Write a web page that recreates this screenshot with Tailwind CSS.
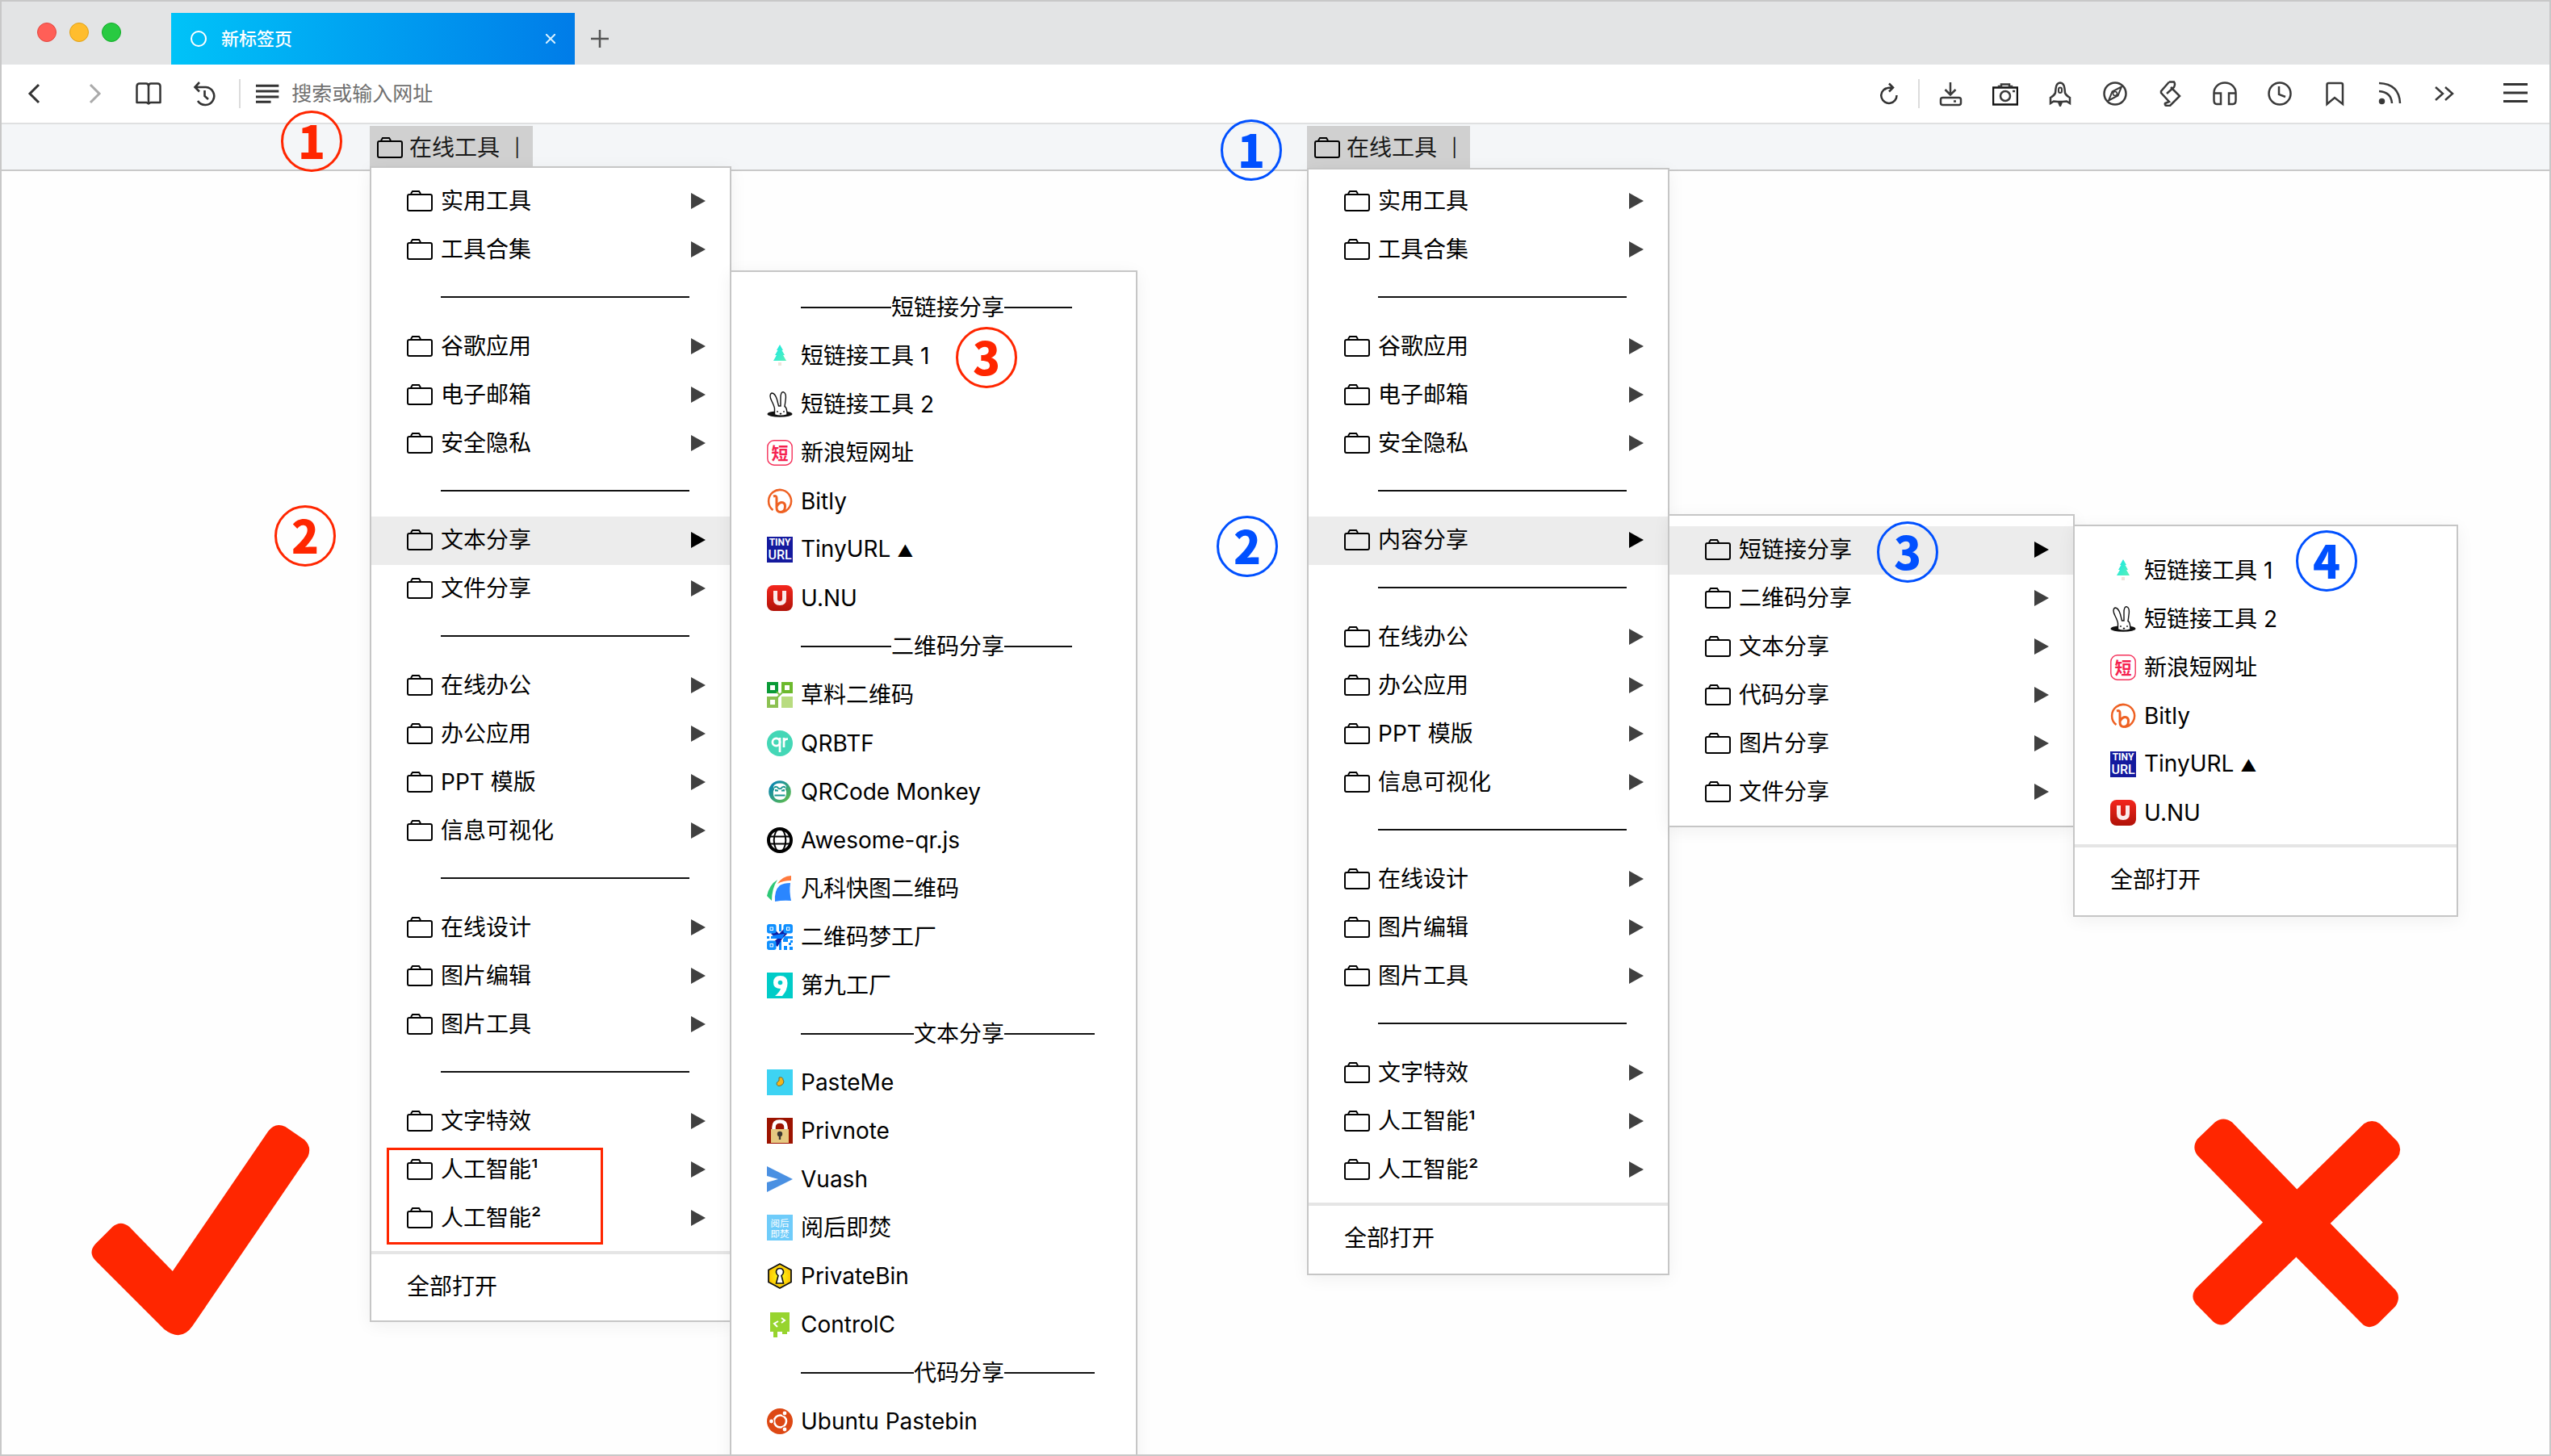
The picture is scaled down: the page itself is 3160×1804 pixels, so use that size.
<!DOCTYPE html>
<html lang="zh-CN">
<head>
<meta charset="utf-8">
<title>新标签页</title>
<script src="https://cdn.jsdelivr.net/npm/@tailwindcss/browser@4"></script>
</head>
<body class="bg-[#fefefe] font-[Inter,'Noto_Sans_CJK_SC',sans-serif] text-[28px] leading-[40px] text-black">
<div class="relative flex h-screen w-full flex-col overflow-hidden border-2 border-[#c8c8c8]">

  <header class="flex h-[78px] shrink-0 items-stretch bg-[#e3e4e5]">
    <div class="flex w-[210px] items-center gap-4 pb-[2px] pl-11">
      <button aria-label="关闭窗口" class="size-6 rounded-full border border-[#e2463f] bg-[#ff5f57]"></button>
      <button aria-label="最小化" class="size-6 rounded-full border border-[#e1a116] bg-[#ffbd2e]"></button>
      <button aria-label="全屏" class="size-6 rounded-full border border-[#12ac28] bg-[#28ca41]"></button>
    </div>
    <div class="mt-[14px] flex w-[500px] items-center bg-linear-to-r from-[#00c3f8] to-[#007ce8] pr-6 pl-6 text-white">
      <svg class="size-5" viewBox="0 0 20 20" fill="none" stroke="#fff" stroke-width="2"><circle cx="10" cy="10" r="9"/></svg>
      <span class="ml-[18px] flex-1 text-[22px] font-medium">新标签页</span>
      <button aria-label="关闭标签页"><svg class="size-3" viewBox="0 0 12 12" stroke="#d6efff" stroke-width="2"><path d="M0 0L12 12M12 0L0 12"/></svg></button>
    </div>
    <button aria-label="新建标签页" class="mt-[14px] flex w-[62px] items-center justify-center"><svg class="size-6" viewBox="0 0 24 24" stroke="#555" stroke-width="2.500"><path d="M12 1V23M1 12H23"/></svg></button>
  </header>

  <div class="flex h-[74px] shrink-0 items-center border-b-2 border-[#dfe0e1] bg-white pr-[26px] pl-6 text-[#3c3c3c]">
    <nav class="flex items-center gap-9" aria-label="导航">
      <button aria-label="后退"><svg class="size-8" viewBox="0 0 32 32" fill="none" stroke="#333" stroke-width="3"><path d="M22 5L11 16L22 27"/></svg></button>
      <button aria-label="前进" class="ml-1.5"><svg class="size-8" viewBox="0 0 32 32" fill="none" stroke="#aaa" stroke-width="3"><path d="M12 5L23 16L12 27"/></svg></button>
      <button aria-label="阅读"><svg class="size-8" viewBox="0 0 32 32" fill="none" stroke="#333" stroke-width="2.500" stroke-linejoin="round"><path d="M1.500 7Q1.500 3.500 5 3.500H13Q16 3.500 16 7Q16 3.500 19 3.500H27Q30.500 3.500 30.500 7V27H18.500L16 28.500L13.500 27H1.500ZM16 7V27"/></svg></button>
      <button aria-label="历史" class="ml-[2px]"><svg class="size-8" viewBox="0 0 32 32" fill="none" stroke="#333" stroke-width="2.600"><path d="M4 8H17A11 11 0 1 1 7 25M9 2L3.500 8L9 13.500M15.500 12V19L20 23"/></svg></button>
    </nav>
    <div class="ml-[26px] h-9 w-[2px] bg-[#dcdcdc]"></div>
    <label class="ml-[18px] flex flex-1 items-center gap-[14px]">
      <svg class="size-8" viewBox="0 0 32 32" stroke="#333" stroke-width="3"><path d="M1 6H30M1 13H30M1 20H30M1 26.500H20"/></svg>
      <input aria-label="地址栏" placeholder="搜索或输入网址" class="h-10 w-full bg-transparent text-[25px] outline-none placeholder:text-[#707070]">
    </label>
    <button aria-label="刷新"><svg class="size-8" viewBox="0 0 32 32" fill="none" stroke="#333" stroke-width="2.500"><path d="M12 9.500A9.600 9.600 0 1 0 25.500 18M10.500 11Q13 8.500 19 8.500M16 3.500L21 8.500L16 13.500"/></svg></button>
    <div class="ml-5 h-9 w-[2px] bg-[#dcdcdc]"></div>
    <div id="tools" class="ml-[22px] flex items-center gap-9"></div>
    <button aria-label="菜单" class="ml-14"><svg class="size-8" viewBox="0 0 32 32" stroke="#333" stroke-width="3"><path d="M1 4.500H31M1 15H31M1 25.500H31"/></svg></button>
  </div>

  <nav class="relative z-10 flex h-[58px] shrink-0 border-b-2 border-[#c9c9c9] bg-[#f4f6f8] pt-[2px] pl-[456px]" aria-label="书签栏">
    <div class="relative h-[54px] w-[202px]">
      <button class="flex h-[50px] w-full items-center bg-[#d0d0d0] pt-1 pl-[9px] text-[#1a1a1a]">
        <svg class="size-8" viewBox="0 0 32 32"><use href="#folder"/></svg><span class="ml-2">在线工具</span><span class="ml-[18px] text-[22px]">|</span>
      </button>
      <div id="menu-left" class="absolute top-[50px] left-0 w-[448px] border-2 border-[#c6c6c6] bg-white pt-3 pb-3 shadow-[0_4px_20px_rgba(0,0,0,0.06)]"></div>
    </div>
    <div class="relative ml-[959px] h-[54px] w-[202px]">
      <button class="flex h-[52px] w-full items-center bg-[#d0d0d0] pt-[2px] pl-[9px] text-[#1a1a1a]">
        <svg class="size-8" viewBox="0 0 32 32"><use href="#folder"/></svg><span class="ml-2">在线工具</span><span class="ml-[18px] text-[22px]">|</span>
      </button>
      <div id="menu-right" class="absolute top-[52px] left-0 w-[449px] border-2 border-[#c6c6c6] bg-white pt-[10px] pb-[14px] shadow-[0_4px_20px_rgba(0,0,0,0.06)]"></div>
    </div>
  </nav>
  <main class="flex-1"></main>

  <div class="absolute top-[1420px] left-[477px] z-20 h-[120px] w-[268px] border-3 border-[#ff2600]"></div>
  <svg class="absolute top-[1391px] left-[111px] z-20 h-[262px] w-[271px]" viewBox="158 159 812 786" fill="#ff2600" role="img" aria-label="正确"><path d="M236 541Q267 514 300 541L460 705L815 185Q841 150 879 168L950 217Q978 243 963 279L533 910Q491 970 428 920L173 665Q145 636 173 604Z"/></svg>
  <svg class="absolute top-[1384px] left-[2714px] z-20 h-[259px] w-[258px]" viewBox="108 137 774 776" fill="#ff2600" role="img" aria-label="错误"><path d="M191 150Q222 126 255 150L496 399L745 155Q775 136 804 155L869 221Q890 250 869 283L620 526L862 773Q884 800 862 834L798 898Q762 924 737 898L493 651L246 890Q215 916 184 890L122 827Q96 797 122 766L369 522L126 273Q104 244 126 212Z"/></svg>

  <span class="absolute top-[135px] left-[346px] z-20 flex size-[76px] items-center justify-center rounded-full border-3 border-[#ff2600] pb-1 font-['Noto_Sans_CJK_SC',sans-serif] text-[56px] leading-none font-black text-[#ff2600]">1</span>
  <span class="absolute top-[624px] left-[338px] z-20 flex size-[76px] items-center justify-center rounded-full border-3 border-[#ff2600] pb-1 font-['Noto_Sans_CJK_SC',sans-serif] text-[56px] leading-none font-black text-[#ff2600]">2</span>
  <span class="absolute top-[403px] left-[1182px] z-20 flex size-[76px] items-center justify-center rounded-full border-3 border-[#ff2600] pb-1 font-['Noto_Sans_CJK_SC',sans-serif] text-[56px] leading-none font-black text-[#ff2600]">3</span>
  <span class="absolute top-[146px] left-[1510px] z-20 flex size-[76px] items-center justify-center rounded-full border-3 border-[#0050ff] pb-1 font-['Noto_Sans_CJK_SC',sans-serif] text-[56px] leading-none font-black text-[#0050ff]">1</span>
  <span class="absolute top-[637px] left-[1505px] z-20 flex size-[76px] items-center justify-center rounded-full border-3 border-[#0050ff] pb-1 font-['Noto_Sans_CJK_SC',sans-serif] text-[56px] leading-none font-black text-[#0050ff]">2</span>
  <span class="absolute top-[644px] left-[2323px] z-20 flex size-[76px] items-center justify-center rounded-full border-3 border-[#0050ff] pb-1 font-['Noto_Sans_CJK_SC',sans-serif] text-[56px] leading-none font-black text-[#0050ff]">3</span>
  <span class="absolute top-[655px] left-[2842px] z-20 flex size-[76px] items-center justify-center rounded-full border-3 border-[#0050ff] pb-1 font-['Noto_Sans_CJK_SC',sans-serif] text-[56px] leading-none font-black text-[#0050ff]">4</span>
</div>

<svg class="absolute size-0" aria-hidden="true">
  <defs>
    <linearGradient id="g-tree" x1="0" y1="0" x2="1" y2="1"><stop offset="0" stop-color="#10e8e8"/><stop offset="1" stop-color="#5cf0b8"/></linearGradient>
    <linearGradient id="g-red" x1="0" y1="0" x2="0" y2="1"><stop offset="0" stop-color="#f4261d"/><stop offset="1" stop-color="#b01208"/></linearGradient>
    <linearGradient id="g-monkey" x1="0" y1="0" x2="1" y2="1"><stop offset="0.100" stop-color="#0583b5"/><stop offset="0.900" stop-color="#5dbb4e"/></linearGradient>
    <radialGradient id="g-hex"><stop offset="0" stop-color="#ffff20"/><stop offset="1" stop-color="#fdc400"/></radialGradient>
  </defs>
</svg>
<svg class="hidden">
  <symbol id="folder" viewBox="0 0 32 32"><path d="M5 7L7 4H15L17 7M1 10Q1 8 3 8H29Q31 8 31 10V26Q31 28 29 28H3Q1 28 1 26Z" fill="none" stroke="#000" stroke-width="2"/></symbol>

  <symbol id="tree" viewBox="0 0 32 32"><path d="M16 2L20 9H18.500L22 15H20L24 22H8L12 15H10L13.500 9H12Z" fill="url(#g-tree)"/><path d="M14 24H18V28H14Z" fill="#eee4dc"/></symbol>
  <symbol id="rabbit" viewBox="0 0 32 32"><ellipse cx="16" cy="28" rx="15.500" ry="3.800" fill="#111"/><path d="M9.500 29V21Q9 18 6 12Q2 4 6 2Q10 2 12.500 10L14.500 18H17V8Q17 0 20.500 0.800Q24.500 2 23 11Q22.500 16 22 18.500Q25 20 25 29Q17 31.500 9.500 29Z" fill="#fff" stroke="#111" stroke-width="1.400"/><path d="M13 24V26M21 24V26M16 27L17 28L18 27" stroke="#111" stroke-width="1.300" fill="none"/></symbol>
  <symbol id="sina" viewBox="0 0 32 32"><rect x="0.800" y="0.800" width="30.400" height="30.400" rx="8" fill="#fff" stroke="#f5325b" stroke-width="1.400"/><text x="16" y="24" text-anchor="middle" font-size="21" font-weight="700" fill="#f5224f" font-family="Noto Sans CJK SC">短</text></symbol>
  <symbol id="bitly" viewBox="0 0 32 32"><path d="M7.500 27A14 14 0 1 1 18 29.800" fill="none" stroke="#ee6123" stroke-width="2.500"/><path d="M8 10Q12 8.500 12 12V24Q12 29.500 17 29.500Q22.500 29 22.500 22.500Q22.500 17.500 18.500 17.500Q15 17.500 12.500 22" fill="none" stroke="#ee6123" stroke-width="3"/></symbol>
  <symbol id="tiny" viewBox="0 0 32 32"><path d="M0 0H32V32H0Z" fill="#141a9e"/><text x="16" y="11" text-anchor="middle" font-size="12" font-weight="700" fill="#fff" font-family="Roboto">TINY</text><text x="16" y="28" text-anchor="middle" font-size="16" font-weight="500" fill="#fff" font-family="Roboto">URL</text></symbol>
  <symbol id="unu" viewBox="0 0 32 32"><rect width="32" height="32" rx="8" fill="url(#g-red)"/><path d="M10.500 7V17Q10.500 22.500 16 22.500Q21.500 22.500 21.500 17V7" fill="none" stroke="#fbeaea" stroke-width="5"/></symbol>
  <symbol id="caoliao" viewBox="0 0 32 32"><path d="M2 2H12V12H2Z" fill="#fff" stroke="#099a37" stroke-width="4"/><path d="M20 2H30V12H20Z" fill="#fff" stroke="#6cb92d" stroke-width="4"/><path d="M2 20H12V30H2Z" fill="#fff" stroke="#8cc152" stroke-width="4"/><path d="M18 18H32V32H18Z" fill="#b8dc80"/><path d="M12 12L16 16L20 12M16 16L12 20" stroke="#7cc04a" stroke-width="2" fill="none"/></symbol>
  <symbol id="qrbtf" viewBox="0 0 32 32"><circle cx="16" cy="16" r="16" fill="#44d7b6"/><circle cx="11.500" cy="14.500" r="4.600" fill="none" stroke="#fff" stroke-width="2.700"/><path d="M16 9V27M21 21V14.500Q21 10.500 26 10.500M21 9V16" stroke="#fff" stroke-width="2.700" fill="none"/></symbol>
  <symbol id="monkey" viewBox="0 0 32 32"><circle cx="16" cy="16" r="13.800" fill="url(#g-monkey)"/><path d="M8 10Q9 5.500 16 5.500Q23 5.500 24 10Q22 13 24 15Q25 26 16 26Q7 26 8 15Q10 13 8 10Z" fill="#fff"/><path d="M9 11Q12 8.500 14 11.500Q16 13 18 11.500Q20 8.500 23 11M9.500 20.500H22.500M11 13V14.500H14M21 13V14.500H18" stroke="#1b9692" stroke-width="2" fill="none"/></symbol>
  <symbol id="globe" viewBox="0 0 32 32"><g fill="none" stroke="#000"><circle cx="16" cy="16" r="14" stroke-width="4"/><ellipse cx="16" cy="16" rx="7.300" ry="14" stroke-width="2"/><path d="M3 11.500H29M3 20.500H29" stroke-width="2"/></g></symbol>
  <symbol id="fanke" viewBox="0 0 32 32"><path d="M0 25Q3 11 13 5Q6 16 6 31Z" fill="#2ec877"/><path d="M13 10Q19 0.500 30 0V6Q20 6 13 10Z" fill="#ff7a3d"/><path d="M10 32Q9 18 16 12Q21 9 29 9Q27.500 20 30 31Q20 30 10 32Z" fill="#2a86ff"/></symbol>
  <symbol id="dream" viewBox="0 0 32 32"><path d="M0 15H3V18H0ZM5 15H13V18H5ZM15 0H18V9H15ZM15 21H18V32H15ZM22 15H32V18H26V22H20V19ZM29 20H32V23H29ZM21 27H25V32H21ZM28 28H32V32H28ZM27 23H30V26H27Z" fill="#0a8cff"/><path d="M10 7L15 12L22 5L25 12L19 18L13 28L7 23L13 18L5 12Z" fill="#0c1ca0"/><path d="M6 14L14 13L22 12L19 18L12 18Z" fill="#0a7cff"/><g fill="#fff" stroke="#1090ff" stroke-width="3.500"><rect x="1.800" y="1.800" width="8" height="8" rx="1"/><rect x="22.200" y="1.800" width="8" height="8" rx="1"/><rect x="1.800" y="22.200" width="8" height="8" rx="1"/></g><path d="M4.500 4.500H7V7H4.500ZM25 4.500H27.500V7H25ZM4.500 25H7V27.500H4.500Z" fill="#1090ff"/></symbol>
  <symbol id="nine" viewBox="0 0 32 32"><path d="M0 0H32V32H0Z" fill="#00ccc8"/><path d="M10 29Q16 24 17 20Q8 20 8 12.500Q8 4 16.500 4Q25.500 4 25.500 13Q25.500 22 19 29Z" fill="#fff"/><circle cx="16.500" cy="12.500" r="2.800" fill="#00ccc8"/></symbol>
  <symbol id="pasteme" viewBox="0 0 32 32"><path d="M0 0H32V32H0Z" fill="#3dd3f3"/><path d="M15 10Q20 9 20 13L21 15Q20 20 15 20.500Q11 20 12.500 16L15 14Z" fill="#f4b51c" stroke="#6b6a3a" stroke-width="1"/></symbol>
  <symbol id="privnote" viewBox="0 0 32 32"><path d="M0 0H32V32H0Z" fill="#9c1300"/><path d="M8.500 14V11.500Q8.500 4.500 16 4.500Q23.500 4.500 23.500 11.500V14" fill="none" stroke="#fff" stroke-width="4.500"/><path d="M5 14H27V31H5Z" fill="#e6c981"/><circle cx="16" cy="20" r="3.200" fill="#3c3630"/><path d="M14.800 21H17.200V27H14.800Z" fill="#3c3630"/></symbol>
  <symbol id="vuash" viewBox="0 0 32 32"><path d="M0 0L32 16L0 32V20L14 16L0 12Z" fill="#4a90e2"/></symbol>
  <symbol id="burn" viewBox="0 0 32 32"><path d="M0 0H32V32H0Z" fill="#6fccfa"/><text x="16" y="15" text-anchor="middle" font-size="11.500" fill="#fff" font-family="Noto Sans CJK SC">阅后</text><text x="16" y="28" text-anchor="middle" font-size="11.500" fill="#fff" font-family="Noto Sans CJK SC">即焚</text></symbol>
  <symbol id="privatebin" viewBox="0 0 32 32"><path d="M16 1L30 8.500V23.500L16 31L2 23.500V8.500Z" fill="url(#g-hex)" stroke="#111" stroke-width="1.800"/><path d="M14 15.500Q11 13 11.500 10Q12.500 6.500 16 6.500Q19.500 6.500 20.500 10Q21 13 18 15.500L20.500 25H11.500Z" fill="#fff" stroke="#111" stroke-width="1.600"/></symbol>
  <symbol id="controlc" viewBox="0 0 32 32"><path d="M4 1H28V25H25V28H19V25H13V32H8V25H4Z" fill="#97d42e"/><path d="M14 12L9 15L13 19M18 8L22 11L18 14" fill="none" stroke="#fff" stroke-width="2"/></symbol>
  <symbol id="ubuntu" viewBox="0 0 32 32"><circle cx="16" cy="16" r="16" fill="#dd4814"/><circle cx="16.500" cy="16" r="7.500" fill="none" stroke="#fff" stroke-width="2.600"/><g fill="#fff" stroke="#dd4814" stroke-width="1.200"><circle cx="5.500" cy="16" r="3"/><circle cx="22" cy="6" r="3"/><circle cx="22" cy="26" r="3"/></g></symbol>
</svg>

<script>
  const folder = (label, active, sub) => `
    <div class="relative">
      <button class="flex h-[60px] w-full items-center pr-[30px] pb-[2px] pl-11 text-left ${active ? 'bg-[#ececec] text-black' : 'text-[#404040]'}">
        <svg class="size-8" viewBox="0 0 32 32"><use href="#folder"/></svg>
        <span class="ml-[10px] flex-1 text-black">${label}</span>
        <svg class="h-5 w-[18px]" viewBox="0 0 18 20" fill="currentColor"><path d="M0 0L18 10L0 20Z"/></svg>
      </button>${sub || ''}
    </div>`;
  const rule = `<div class="flex h-[60px] items-center pb-1 pl-[86px]" role="separator"><div class="h-[2px] w-[308px] bg-[#111]"></div></div>`;
  const link = ([icon, label]) => `
    <a href="#" class="flex h-[60px] items-center pt-[2px] pl-11"><svg class="size-8" viewBox="0 0 32 32"><use href="#${icon}"/></svg><span class="ml-[10px]">${label}</span></a>`;
  const heading = (text, before, after) => `
    <div class="flex h-[60px] items-center pt-[2px] pl-[86px]"><span class="h-[2px] bg-[#111]" style="width:${before * 28}px"></span><span>${text}</span><span class="h-[2px] bg-[#111]" style="width:${after * 28}px"></span></div>`;
  const openAll = `<div class="mt-[10px] mb-[10px] h-1 bg-[#e5e5e5]"></div><button class="flex h-[60px] w-full items-center pl-11">全部打开</button>`;
  const rows = (list) => list.map((r) => r === '-' ? rule : folder(r)).join('');

  const short = [['tree', '短链接工具 1'], ['rabbit', '短链接工具 2'], ['sina', '新浪短网址'], ['bitly', 'Bitly'], ['tiny', 'TinyURL <span class="text-[20px]">▲</span>'], ['unu', 'U.NU']].map(link).join('');
  const qr = [['caoliao', '草料二维码'], ['qrbtf', 'QRBTF'], ['monkey', 'QRCode Monkey'], ['globe', 'Awesome-qr.js'], ['fanke', '凡科快图二维码'], ['dream', '二维码梦工厂'], ['nine', '第九工厂']].map(link).join('');
  const paste = [['pasteme', 'PasteMe'], ['privnote', 'Privnote'], ['vuash', 'Vuash'], ['burn', '阅后即焚'], ['privatebin', 'PrivateBin'], ['controlc', 'ControlC']].map(link).join('');

  const leftSub = `<div class="absolute -top-[305px] left-full h-[1600px] w-[505px] border-2 border-[#c6c6c6] bg-white pt-[13px] shadow-[0_4px_20px_rgba(0,0,0,0.06)]">
    ${heading('短链接分享', 4, 3)}${short}${heading('二维码分享', 4, 3)}${qr}${heading('文本分享', 5, 4)}${paste}${heading('代码分享', 5, 4)}${link(['ubuntu', 'Ubuntu Pastebin'])}</div>`;
  const fourth = `<div class="absolute -top-[2px] left-full w-[477px] border-2 border-[#c6c6c6] bg-white pt-6 pb-[14px] shadow-[0_4px_20px_rgba(0,0,0,0.06)]">${short}${openAll}</div>`;
  const third = `<div class="absolute -top-[3px] left-full w-[504px] border-2 border-[#c6c6c6] bg-white pt-[13px] pb-[11px] shadow-[0_4px_20px_rgba(0,0,0,0.06)]">
    ${folder('短链接分享', true, fourth)}${rows(['二维码分享', '文本分享', '代码分享', '图片分享', '文件分享'])}</div>`;

  const head = ['实用工具', '工具合集', '-', '谷歌应用', '电子邮箱', '安全隐私', '-'];
  const tail = ['-', '在线办公', '办公应用', 'PPT 模版', '信息可视化', '-', '在线设计', '图片编辑', '图片工具', '-', '文字特效', '人工智能¹', '人工智能²'];
  document.getElementById('menu-left').innerHTML = rows(head) + folder('文本分享', true, leftSub) + rows(['文件分享', ...tail]) + openAll;
  document.getElementById('menu-right').innerHTML = rows(head) + folder('内容分享', true, third) + rows(tail) + openAll;

  const tools = [
    ['下载', '<path d="M16 2V17M9.500 11L16 17.500L22.500 11"/><rect x="4" y="21" width="25" height="9" rx="2.500"/><path d="M20 25.500H23"/>'],
    ['截图', '<path d="M1 8.500H31V29.500H1Z" stroke="#111"/><path d="M8 8V7H11V4.500H21V7H24V8M25 13H28"/><circle cx="16" cy="19" r="6"/>'],
    ['加速', '<path d="M16 2.500Q11 3 10.500 10L10 15Q9 18 4 21V28L8 25.500L13 26H19L24 25.500L28 28V21Q23 18 22 15L21.500 10Q21 3 16 2.500ZM14 26L16 31L18 26"/><rect x="14" y="8.500" width="4" height="6.500" rx="2" stroke-width="2"/>'],
    ['指南针', '<circle cx="16" cy="16" r="13.500"/><path d="M24 7.500L19.500 18.500L8 24.500L12.500 13.500Z" stroke-width="2"/><circle cx="16" cy="16" r="2.500" stroke-width="1.500"/>'],
    ['闪电', '<path d="M15 1.500L5 13V15L15 26L10 28Q9 31 13 31H16L28 19L17 8M15 1.500H21Q23 4 21 8L12 16"/>'],
    ['音乐', '<path d="M2.500 24V15A13.500 12.500 0 0 1 29.500 15V24Q29.500 29 26 29H21V15.500H29M3 15.500H11V29H6Q2.500 29 2.500 24"/>'],
    ['历史', '<circle cx="16" cy="16" r="13.500"/><path d="M15 7V17L23 20"/>'],
    ['书签', '<path d="M6.500 5Q6.500 3 8.500 3H24Q26 3 26 5V29L16 21L6.500 29Z"/>'],
    ['订阅', '<path d="M3 3Q28 4 29 28M3 13Q18 14 19 28"/><circle cx="6.500" cy="25.500" r="2.500" fill="#333"/>'],
    ['更多', '<path d="M5 8L14 16L5 24M17 8L26 16L17 24"/>'],
  ];
  document.getElementById('tools').innerHTML = tools.map(([name, art]) =>
    `<button aria-label="${name}"><svg class="size-8" viewBox="0 0 32 32" fill="none" stroke="#3a3a3a" stroke-width="2.500">${art}</svg></button>`).join('');
</script>
</body>
</html>
